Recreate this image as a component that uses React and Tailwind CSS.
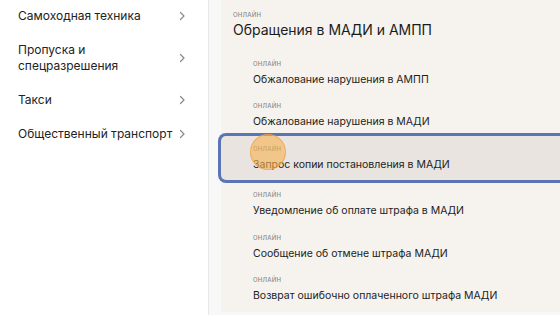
import React from "react";

const Chevron = () => (
  <svg width="8" height="10" viewBox="0 0 8 10" className="shrink-0">
    <path d="M2.5 1.5 L6 5 L2.5 8.5" fill="none" stroke="#8a8a8a" strokeWidth="1.2" strokeLinecap="round" strokeLinejoin="round" />
  </svg>
);

const leftItems = [
  ["Самоходная техника"],
  ["Пропуска и", "спецразрешения"],
  ["Такси"],
  ["Общественный транспорт"],
];

const sub = [
  { t: "Обжалование нарушения в АМПП", h: "h-[42px] pt-[6px]" },
  { t: "Обжалование нарушения в МАДИ", h: "h-[42px] pt-[6px]" },
  { t: "Запрос копии постановления в МАДИ", sel: true },
  { t: "Уведомление об оплате штрафа в МАДИ", h: "h-[43px] pt-[6px]" },
  { t: "Сообщение об отмене штрафа МАДИ", h: "h-[42px] pt-[6px]" },
  { t: "Возврат ошибочно оплаченного штрафа МАДИ", h: "h-[43px] pt-[6px]" },
];

const Label = () => (
  <div className="text-[6px] leading-[10px] tracking-[0.04em] font-medium text-[#8a8a8a] uppercase">онлайн</div>
);

export default function App() {
  return (
    <div
      className="w-[560px] h-[315px] overflow-hidden flex bg-[#f8f8f8] text-[#1c1c1c]"
      style={{ fontFamily: "Inter, 'Noto Sans', sans-serif" }}
    >
      <div className="w-[209px] h-full bg-white border-r border-[#e8e8e8] flex flex-col gap-[18px] pt-[8px] shrink-0">
        {leftItems.map((lines, i) => (
          <div key={i} className="flex items-center justify-between pl-[18px] pr-[22px]">
            <div className="text-[12px] leading-[16px] text-[#222] whitespace-nowrap">
              {lines.map((l, j) => (
                <div key={j}>{l}</div>
              ))}
            </div>
            <Chevron />
          </div>
        ))}
      </div>
      <div className="flex-1 pl-[12px] h-full">
        <div className="relative h-[312px] bg-[#f6f3ee] pt-[10px]">
          <div className="pl-[12px]">
            <Label />
            <div className="text-[14px] leading-[20px] text-[#1c1c1c]">Обращения в МАДИ и АМПП</div>
          </div>
          <div className="mt-[13px] flex flex-col">
            {sub.map((s, i) =>
              s.sel ? (
                <div
                  key={i}
                  className="relative h-[44px] pt-[8px] mt-[-1px] mb-[4px] pl-[32px] bg-[#e9e4df] rounded-[5px] ring-[3px] ring-[#5b74b5] w-[360px]"
                >
                  <Label />
                  <div className="mt-[3px] text-[10.5px] leading-[16px] text-[#1c1c1c]">{s.t}</div>
                  <div className="absolute left-[29px] top-[-2px] w-[36px] h-[36px] rounded-full bg-[#f7b24f]/60 border border-[#eea04a]/70" />
                </div>
              ) : (
                <div key={i} className={`${s.h} pl-[32px]`}>
                  <Label />
                  <div className="mt-[3px] text-[10.5px] leading-[16px] text-[#1c1c1c]">{s.t}</div>
                </div>
              )
            )}
          </div>
        </div>
      </div>
    </div>
  );
}
